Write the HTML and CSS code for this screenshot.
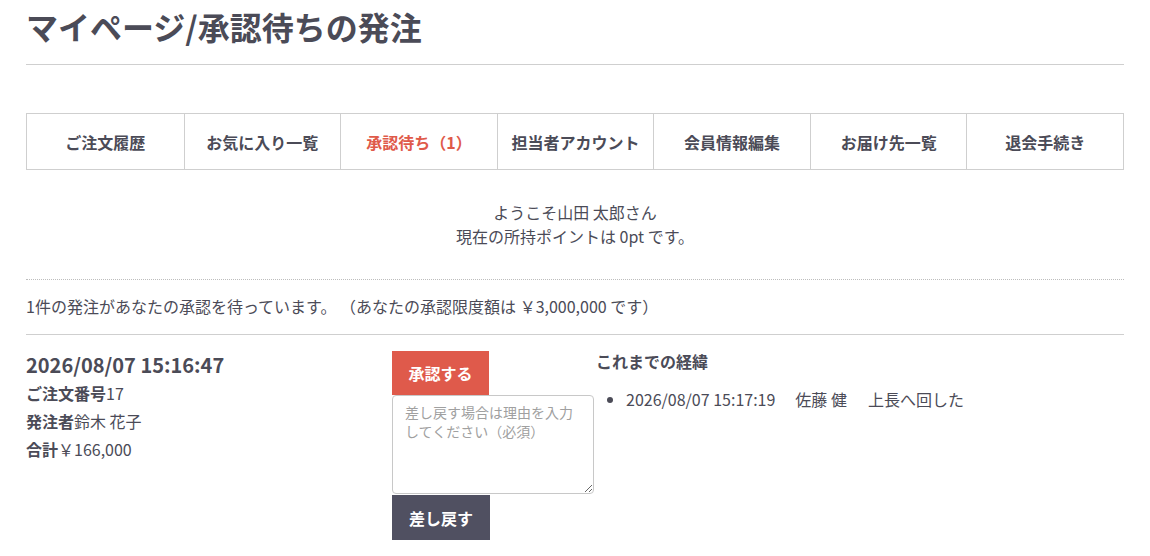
FILE: index.html
```html
<!DOCTYPE html>
<html lang="ja">
<head>
<meta charset="utf-8">
<title>マイページ/承認待ちの発注</title>
<link rel="stylesheet" href="styles.css">
</head>
<body>
<div class="page">
  <h1 class="page-title">マイページ/承認待ちの発注</h1>
  <nav class="tabs">
    <a class="tab">ご注文履歴</a>
    <a class="tab">お気に入り一覧</a>
    <a class="tab tab-active">承認待ち（1）</a>
    <a class="tab">担当者アカウント</a>
    <a class="tab">会員情報編集</a>
    <a class="tab">お届け先一覧</a>
    <a class="tab">退会手続き</a>
  </nav>
  <div class="welcome">
    <p>ようこそ山田 太郎さん</p>
    <p>現在の所持ポイントは 0pt です。</p>
  </div>
  <p class="notice">1件の発注があなたの承認を待っています。 （あなたの承認限度額は ￥3,000,000 です）</p>
  <div class="order">
    <div class="order-info">
      <div class="order-date">2026/08/07 15:16:47</div>
      <div class="order-line"><b>ご注文番号</b>17</div>
      <div class="order-line"><b>発注者</b>鈴木 花子</div>
      <div class="order-line"><b>合計</b>￥166,000</div>
    </div>
    <div class="order-actions">
      <button class="btn btn-approve">承認する</button>
      <textarea class="reason" placeholder="差し戻す場合は理由を入力してください（必須）"></textarea>
      <button class="btn btn-reject">差し戻す</button>
    </div>
    <div class="order-history">
      <h3 class="history-title">これまでの経緯</h3>
      <ul class="history-list">
        <li>2026/08/07 15:17:19<span class="gap"></span>佐藤 健<span class="gap2"></span>上長へ回した</li>
      </ul>
    </div>
  </div>
</div>
</body>
</html>
```

FILE: styles.css
```css
* { box-sizing: border-box; }
html, body { margin: 0; padding: 0; background: #fff; }
body {
  font-family: "Noto Sans CJK JP", "Noto Sans", sans-serif;
  color: #4b4b57;
  font-size: 16px;
}
.page {
  width: 1098px;
  margin-left: 26px;
}
.page-title {
  margin: 0;
  padding-top: 4px;
  font-size: 32px;
  line-height: 44px;
  font-weight: 700;
  color: #4b4b57;
  height: 65px;
  border-bottom: 1px solid #cfcfcf;
}
.tabs {
  display: grid;
  grid-template-columns: repeat(7, 1fr);
  margin-top: 48px;
  border: 1px solid #cfcfcf;
  height: 57px;
}
.tab {
  display: flex;
  align-items: center;
  justify-content: center;
  font-size: 16px;
  font-weight: 700;
  color: #4b4b57;
  border-left: 1px solid #cfcfcf;
}
.tab:first-child { border-left: none; }
.tab-active { color: #df5a4a; }
.welcome {
  text-align: center;
  padding-top: 30px;
  padding-bottom: 31px;
  border-bottom: 1px dotted #bdbdbd;
  font-size: 16px;
  line-height: 24px;
}
.welcome p { margin: 0; }
.notice {
  margin: 0;
  font-size: 16px;
  line-height: 24px;
  padding: 14px 0 16px;
  border-bottom: 1px solid #cfcfcf;
}
.order {
  display: flex;
  padding-top: 16px;
}
.order-info { width: 366px; }
.order-date {
  font-size: 20px;
  font-weight: 700;
  line-height: 28px;
}
.order-line {
  font-size: 16px;
  line-height: 28px;
}
.order-line b { font-weight: 700; }
.order-actions {
  width: 204px;
  display: flex;
  flex-direction: column;
  align-items: flex-start;
}
.btn {
  font-family: inherit;
  border: none;
  color: #fff;
  font-size: 16px;
  font-weight: 700;
  height: 44px;
  padding: 0 16px;
  cursor: pointer;
}
.btn-approve { background: #df5a4b; width: 97px; }
.btn-reject { background: #505061; width: 98px; height: 45px; margin-top: 1px; }
.reason {
  width: 202px;
  height: 99px;
  border: 1px solid #c8c8c8;
  border-radius: 4px;
  padding: 7px 12px;
  font-family: inherit;
  font-size: 14px;
  line-height: 19px;
  color: #4b4b57;
  resize: both;
}
.reason::placeholder { color: #a0a0a0; }
.history-title {
  margin: 0;
  font-size: 16px;
  font-weight: 700;
  line-height: 20px;
}
.history-list {
  margin: 16px 0 0;
  padding-left: 30px;
  font-size: 16px;
  line-height: 24px;
}
.gap { display: inline-block; width: 20px; }
.gap2 { display: inline-block; width: 21px; }
```
